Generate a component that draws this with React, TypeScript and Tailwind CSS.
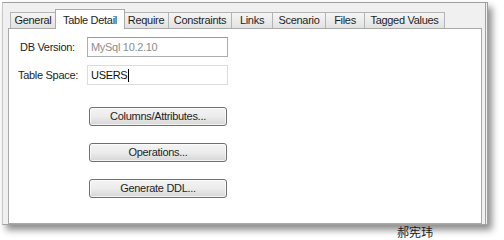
const tabs = [
  { label: 'General', w: 'w-[46px]' },
  { label: 'Table Detail', w: 'w-[70px]', active: true },
  { label: 'Require', w: 'w-[45px]' },
  { label: 'Constraints', w: 'w-[63px]' },
  { label: 'Links', w: 'w-[41px]' },
  { label: 'Scenario', w: 'w-[53px]' },
  { label: 'Files', w: 'w-[39px]' },
  { label: 'Tagged Values', w: 'w-[80px]' },
];

const buttons = ['Columns/Attributes...', 'Operations...', 'Generate DDL...'];

function Tab({ label, w, active }: { label: string; w: string; active?: boolean }) {
  if (active) {
    return (
      <div
        className={`${w} relative z-10 -mx-px -mb-px flex h-[20px] items-start justify-center border border-b-0 border-[#a9a9a9] bg-white pt-[2px] text-[11px] tracking-[-0.3px] text-[#1e1e1e]`}
      >
        {label}
      </div>
    );
  }
  return (
    <div
      className={`${w} flex h-[16px] items-center justify-center border border-b-0 border-l-0 border-[#b4b4b4] bg-gradient-to-b from-[#f5f5f5] to-[#e2e2e2] text-[11px] tracking-[-0.3px] text-[#1e1e1e] first:border-l`}
    >
      {label}
    </div>
  );
}

export default function App() {
  return (
    <div className="h-[240px] w-[504px] overflow-hidden bg-white font-['Liberation_Sans',Arial,sans-serif]">
      <div className="ml-[2px] mt-[2px] flex h-[223px] w-[486px] flex-col border border-r-[3px] border-double border-[#a0a0a0] border-l-[#c8c8c8] bg-[#f0f0f0] pl-[5px] pr-[3px] pt-[6px] shadow-[4px_5px_7px_rgba(0,0,0,0.45)]">
        <div className="flex h-[19px] items-end pl-[2px]">
          {tabs.map((t) => (
            <Tab key={t.label} {...t} />
          ))}
        </div>
        <div className="flex flex-1 flex-col border border-[#a9a9a9] bg-white pl-[10px] pt-[8px] text-[11px] tracking-[-0.3px] text-[#1e1e1e]">
          <div className="flex h-[20px] items-center">
            <span className="w-[68px] pl-[1px]">DB Version:</span>
            <div className="flex h-[20px] w-[141px] items-center border border-[#abadb3] border-t-[#9a9a9a] bg-white pl-[3px] text-[#8d8d8d]">
              MySql 10.2.10
            </div>
          </div>
          <div className="mt-[8px] flex h-[20px] items-center">
            <span className="ml-[-1px] w-[69px]">Table Space:</span>
            <div className="flex h-[20px] w-[141px] items-center border border-[#dcdcdc] bg-white pl-[3px] text-[#111]">
              USERS
              <span className="ml-[1px] inline-block h-[13px] w-px bg-black" />
            </div>
          </div>
          <div className="mt-[22px] flex flex-col gap-[17px] pl-[70px]">
            {buttons.map((b) => (
              <div
                key={b}
                className="flex h-[19px] w-[138px] items-center justify-center rounded-[3px] border border-[#707070] bg-gradient-to-b from-[#f4f4f4] via-[#ececec] to-[#d6d6d6] text-[11px] text-[#1e1e1e] shadow-[inset_0_0_0_1px_rgba(255,255,255,0.7)]"
              >
                {b}
              </div>
            ))}
          </div>
        </div>
      </div>
      <div className="mt-[1px] pl-[397px] font-['Noto_Sans_CJK_SC',sans-serif] text-[12px] leading-[12px] text-[#1a1a1a]">
        郝宪玮
      </div>
    </div>
  );
}
